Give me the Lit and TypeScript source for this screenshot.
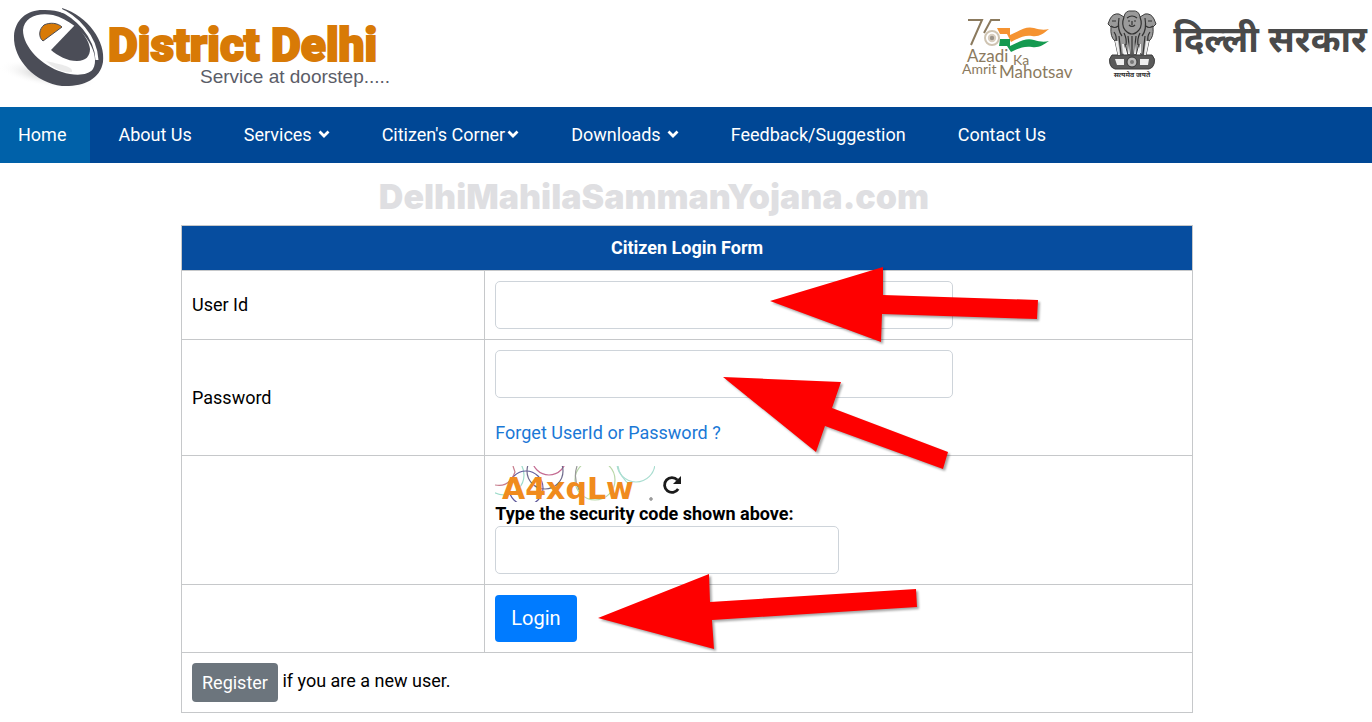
import { LitElement, html, css, svg } from "lit";
import { customElement } from "lit/decorators.js";

const chevron = html`<svg class="chev" viewBox="0 0 12 8" aria-hidden="true">
  <path d="M1.5 1.5 L6 6 L10.5 1.5" fill="none" stroke="currentColor" stroke-width="2.8" />
</svg>`;

const logo = html`<svg class="logo" viewBox="0 0 400 100" role="img" aria-label="e-District Delhi">
  <defs>
    <radialGradient id="shade" cx="0.5" cy="0.5" r="0.5">
      <stop offset="0" stop-color="#bbb" /><stop offset="1" stop-color="#fff" stop-opacity="0" />
    </radialGradient>
  </defs>
  <ellipse cx="48" cy="75" rx="50" ry="12" fill="url(#shade)" transform="rotate(10 48 75)" />
  <path fill="#4b4d57" d="M62 8 C88 16 106 42 103 62 C100 80 82 87 62 86 C36 83 13 60 14 36 C15 19 28 9 45 10 C52 10 58 11 63 13 Z" />
  <path fill="#fff" d="M23 30 C24 17 38 12 53 15 C68 19 82 30 89 42 C95 52 97 62 93 69 C88 76 74 76 62 72 C42 66 23 47 23 30 Z" />
  <path fill="none" stroke="#fff" stroke-width="3" d="M58 9 C76 16 96 36 97 60" />
  <path fill="#d87a06" stroke="#4b4d57" stroke-width="1" d="M43 41 C38 37 39 29 44 25 C50 22 58 23 62 27 Z" />
  <path fill="#4b4d57" d="M75 25 C83 32 89 41 90 49 C90 56 86 61 77 61 C67 61 58 56 51 50 Z" />
  <path fill="#ddd" opacity="0.6" d="M46 61 C58 64 74 66 72 72 C62 73 53 68 46 61 Z" />
  <text class="logo-name" x="108" y="61">District Delhi</text>
  <text class="logo-tag" x="200" y="83">Service at doorstep.....</text>
</svg>`;

const azadi = html`<svg class="azadi" viewBox="0 0 116 70" role="img" aria-label="Azadi Ka Amrit Mahotsav">
  <g fill="none" stroke="#8b7a5e" stroke-width="2">
    <path d="M9 6 H23 L12 31" /><path d="M41 6 H32 L25 19" />
    <circle cx="33" cy="24" r="7" stroke="#cfc4b2" /><circle cx="33" cy="24" r="3.2" fill="#9c948a" stroke="#d9cfc0" />
  </g>
  <path fill="#f59331" d="M38 14 H51 V21 C62 16 67 12 75 14 C81 16 86 16 90 15 C84 20 80 23 73 22 C65 21 60 24 52 28 L48 20 H41 Z" />
  <path fill="#159a50" d="M41 25 H51 V32 C62 27 67 24 75 26 C81 28 86 28 90 27 C84 31 80 34 73 33 C65 32 60 34 52 38 L48 32 H40 Z" />
  <text x="8" y="48" class="az">Azadi</text><text x="54" y="51" class="az small">Ka</text>
  <text x="3" y="60" class="az small">Amrit</text><text x="40" y="64" class="az">Mahotsav</text>
</svg>`;

const emblem = html`<svg class="emblem" viewBox="0 0 50 68" role="img" aria-label="State emblem of India">
  <g fill="#9a9a9a" stroke="#3d3d3d" stroke-width="1">
    <path d="M3 9 Q6 3 12 4 L17 7 Q18 0 25 1 Q32 0 33 7 L38 4 Q44 3 47 9 L49 14 L46 17 Q47 27 42 31 L39 45 H34 L32 34 L29 45 H21 L18 34 L16 45 H11 L8 31 Q3 27 4 17 L1 14 Z" />
    <path d="M5 45 Q1 49 3 54 Q4 58 8 59 H42 Q46 58 47 54 Q49 49 45 45 Z" fill="#5a5a5a" />
  </g>
  <g fill="none" stroke="#333" stroke-width="1.2">
    <path d="M17 7 Q14 15 18 20 Q25 28 32 20 Q36 15 33 7 M20 8 Q25 4 30 8 M21 11 H23 M27 11 H29 M22 15 Q25 18 28 15 M25 11 V15" />
    <path d="M5 11 H9 M4 16 Q8 19 11 16 M12 8 Q10 20 15 26 M45 11 H41 M46 16 Q42 19 39 16 M38 8 Q40 20 35 26" />
    <path d="M7 22 Q10 26 9 31 M43 22 Q40 26 41 31 M17 23 Q20 29 19 35 M33 23 Q30 29 31 35 M25 26 V44 M12 26 L14 44 M38 26 L36 44 M21 26 L23 44 M29 26 L27 44" />
  </g>
  <g fill="#eee">
    <path d="M8 31 L11 45 H13 L11 31 Z M42 31 L39 45 H37 L39 31 Z M22 32 L23 44 H21 Z M28 32 L27 44 H29 Z M15 34 L16 44 L19 43 L17 34 Z M34 34 L34 43 L31 43 L33 34 Z" />
    <circle cx="25" cy="52" r="5" fill="#bbb" stroke="#333" /><circle cx="25" cy="52" r="2" fill="#777" />
    <path d="M8 49 H17 V55 H10 Z M33 49 H42 L41 55 H33 Z" />
  </g>
  <text x="25" y="67" class="motto" text-anchor="middle">सत्यमेव जयते</text>
</svg>`;

const captcha = html`<svg class="captcha" viewBox="0 0 160 36" role="img" aria-label="Security code">
  <clipPath id="frame"><rect width="160" height="36" /></clipPath>
  <g fill="none" stroke-width="1.2" clip-path="url(#frame)">
    <circle cx="9" cy="9" r="20" stroke="#9fdccb" /><circle cx="31" cy="22" r="17" stroke="#625c9c" />
    <circle cx="54" cy="-8" r="17" stroke="#c46b92" /><circle cx="50" cy="5" r="18" stroke="#6f6a8c" />
    <circle cx="141" cy="-3" r="19" stroke="#a9ddd0" /><circle cx="100" cy="14" r="20" stroke="#b9d7a8" />
    <path d="M0 19 Q14 22 20 6 L18 0" stroke="#c77c8c" /><path d="M82 0 Q78 12 84 24" stroke="#999" /><path d="M123 0 Q124 10 136 20" stroke="#a9ddd0" />
  </g>
  <text class="code" x="7" y="33">A4xqLw</text>
  <circle cx="156" cy="33" r="1.4" fill="#aaa" stroke="#777" stroke-width="0.6" />
</svg>`;

const ARROWS = [
  "589,76 702,42 702,70 857,75 856,94 701,89 700,117",
  "542,152 660,157 651,183 767,227 762,244 644,201 635,227",
  "417,393 528,349 529,377 735,364 736,382 531,395 533,424",
];

const NAV: { label: string; menu?: boolean; tight?: boolean; active?: boolean }[] = [
  { label: "Home", active: true },
  { label: "About Us" },
  { label: "Services", menu: true },
  { label: "Citizen's Corner", menu: true, tight: true },
  { label: "Downloads", menu: true },
  { label: "Feedback/Suggestion" },
  { label: "Contact Us" },
];

@customElement("app-root")
export class AppRoot extends LitElement {
  static styles = css`
    :host { display: block; min-height: 100vh; background: #fff; color: #000; font: 18px/24px Roboto, sans-serif; }
    * { box-sizing: border-box; }
    .top { display: flex; align-items: flex-start; justify-content: space-between; min-height: 107px; }
    .logo { width: 400px; height: 100px; }
    .logo-name { font: 900 46px Roboto, sans-serif; fill: #d87a06; stroke: #d87a06; stroke-width: 2px; }
    .logo-tag { font: 19px "Liberation Sans", sans-serif; fill: #5b5d68; }
    .gov { display: flex; align-items: flex-start; padding: 10px 5px 0 0; }
    .azadi { width: 116px; height: 70px; margin: 4px 32px 0 0; }
    .az { font: 17px Lato, sans-serif; fill: #8b7a5e; }
    .az.small { font-size: 14px; }
    .emblem { width: 50px; height: 68px; margin-right: 16px; }
    .motto { font: bold 7px "Noto Sans", sans-serif; fill: #333; }
    .hindi { font: bold 36px/68px "Noto Sans Devanagari", "Noto Sans", sans-serif; color: #4a4a4a; }
    .nav { display: flex; flex-wrap: wrap; gap: 10px; background: #004795; }
    .item { padding: 16px 24px 16px 18px; color: #fff; text-decoration: none; white-space: nowrap; }
    .item.active { background: #0061a9; }
    .chev { width: 12px; height: 8px; margin-left: 6px; vertical-align: 3px; }
    .tight .chev { margin-left: 2px; }
    .mark { margin: 0; text-align: center; font: 900 34px/40px Inter, sans-serif; color: #dfdfe2; padding: 14px 66px 8px 0; }
    main { padding-left: 2px; }
    .panel { position: relative; max-width: 1012px; margin: 0 auto; }
    .form { width: 100%; border-collapse: collapse; table-layout: fixed; }
    .form th, .form td { border: 1px solid #c6c8ca; padding: 10px; text-align: left; font-weight: 400; }
    .form .title { background: #064d9f; color: #fff; text-align: center; font-weight: 700; }
    .side { width: 30%; }
    .field { display: block; width: 458px; max-width: 100%; height: 48px; border: 1px solid #ced4da; border-radius: 5px; padding: 6px 12px; font: inherit; background: transparent; }
    .field.short { width: 344px; }
    .forget { display: block; margin-top: 23px; color: #1a78d6; text-decoration: none; }
    .code-row { display: flex; gap: 6px; }
    .captcha { width: 160px; height: 36px; display: block; overflow: visible; }
    .code { font: bold 30px "DejaVu Sans", sans-serif; fill: #f08b1d; }
    .reload { border: 0; background: none; padding: 8px 0 0; width: 22px; height: 30px; color: #1b1b1b; }
    .reload svg { display: block; width: 20px; height: 20px; margin: 0 auto; }
    .hint { display: block; font-weight: 700; }
    .btn { display: inline-block; border: 0; border-radius: 4px; color: #fff; font: inherit; line-height: 23px; vertical-align: middle; }
    .login { display: block; background: #007bff; font-size: 20px; padding: 12px 16px; }
    .register { background: #6c757d; padding: 8px 10px; }
    .arrows { position: absolute; left: 0; top: 0; overflow: visible; width: 1px; height: 1px; pointer-events: none; filter: drop-shadow(2px 2px 1px rgba(0, 0, 0, 0.35)); }
  `;

  render() {
    return html`
      <header class="top">
        ${logo}
        <div class="gov">${azadi}${emblem}<span class="hindi" lang="hi">दिल्ली सरकार</span></div>
      </header>
      <nav class="nav">
        ${NAV.map((n) => html`<a href="#" class="item ${n.active ? "active" : ""} ${n.tight ? "tight" : ""}">${n.label}${n.menu ? chevron : ""}</a>`)}
      </nav>
      <main>
        <p class="mark">DelhiMahilaSammanYojana.com</p>
        <form class="panel" @submit=${(e: Event) => e.preventDefault()}>
          <table class="form">
            <colgroup><col class="side" /><col /></colgroup>
            <tbody>
              <tr><th class="title" colspan="2">Citizen Login Form</th></tr>
              <tr>
                <th><label for="uid">User Id</label></th>
                <td><input id="uid" class="field" type="text" /></td>
              </tr>
              <tr>
                <th><label for="pwd">Password</label></th>
                <td><input id="pwd" class="field" type="password" /><a class="forget" href="#">Forget UserId or Password ?</a></td>
              </tr>
              <tr>
                <td></td>
                <td>
                  <div class="code-row">
                    ${captcha}
                    <button class="reload" type="button" aria-label="Reload code">
                      <svg viewBox="0 0 20 20"><path d="M16.2 14 A7.4 7.4 0 1 1 15.4 5" fill="none" stroke="currentColor" stroke-width="2.8" /><path d="M19 1 V9 H11 Z" fill="currentColor" /></svg>
                    </button>
                  </div>
                  <label class="hint" for="code">Type the security code shown above:</label>
                  <input id="code" class="field short" type="text" />
                </td>
              </tr>
              <tr><td></td><td><button class="btn login" type="submit">Login</button></td></tr>
              <tr><td colspan="2"><button class="btn register" type="button">Register</button> if you are a new user.</td></tr>
            </tbody>
          </table>
          <svg class="arrows" aria-hidden="true">${ARROWS.map((p) => svg`<polygon points=${p} fill="#fe0000" />`)}</svg>
        </form>
      </main>
    `;
  }
}
